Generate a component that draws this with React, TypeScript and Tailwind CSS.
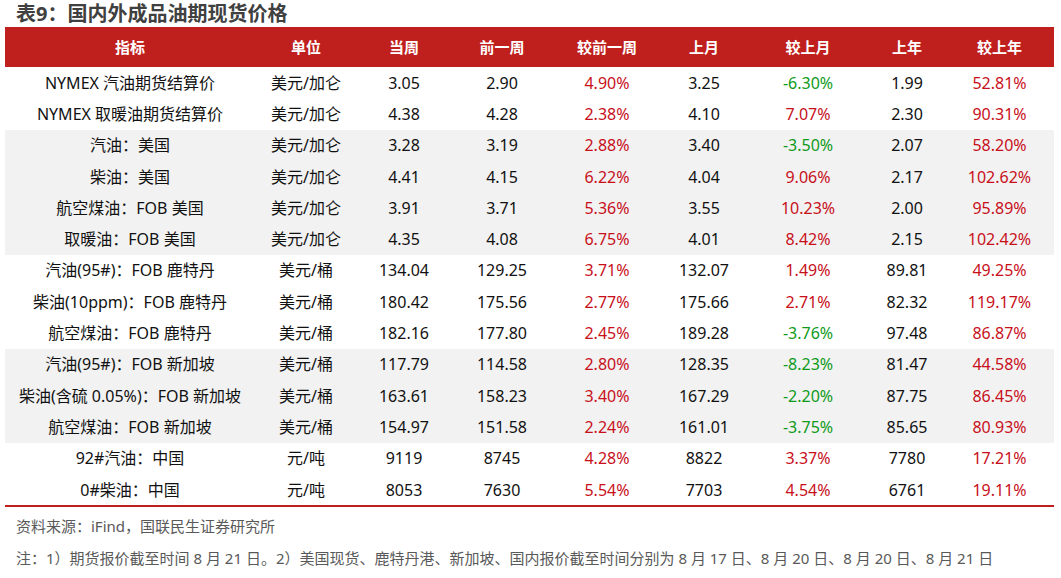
const cols = "grid grid-cols-[250px_102px_94px_102px_108px_86px_122px_76px_109px]";

type Row = {
  name: string;
  unit: string;
  cur: string;
  prev: string;
  wow: string;
  lastM: string;
  mom: string;
  lastY: string;
  yoy: string;
  shade: boolean;
};

const rows: Row[] = [
  { name: "NYMEX 汽油期货结算价", unit: "美元/加仑", cur: "3.05", prev: "2.90", wow: "4.90%", lastM: "3.25", mom: "-6.30%", lastY: "1.99", yoy: "52.81%", shade: false },
  { name: "NYMEX 取暖油期货结算价", unit: "美元/加仑", cur: "4.38", prev: "4.28", wow: "2.38%", lastM: "4.10", mom: "7.07%", lastY: "2.30", yoy: "90.31%", shade: false },
  { name: "汽油：美国", unit: "美元/加仑", cur: "3.28", prev: "3.19", wow: "2.88%", lastM: "3.40", mom: "-3.50%", lastY: "2.07", yoy: "58.20%", shade: true },
  { name: "柴油：美国", unit: "美元/加仑", cur: "4.41", prev: "4.15", wow: "6.22%", lastM: "4.04", mom: "9.06%", lastY: "2.17", yoy: "102.62%", shade: true },
  { name: "航空煤油：FOB 美国", unit: "美元/加仑", cur: "3.91", prev: "3.71", wow: "5.36%", lastM: "3.55", mom: "10.23%", lastY: "2.00", yoy: "95.89%", shade: true },
  { name: "取暖油：FOB 美国", unit: "美元/加仑", cur: "4.35", prev: "4.08", wow: "6.75%", lastM: "4.01", mom: "8.42%", lastY: "2.15", yoy: "102.42%", shade: true },
  { name: "汽油(95#)：FOB 鹿特丹", unit: "美元/桶", cur: "134.04", prev: "129.25", wow: "3.71%", lastM: "132.07", mom: "1.49%", lastY: "89.81", yoy: "49.25%", shade: false },
  { name: "柴油(10ppm)：FOB 鹿特丹", unit: "美元/桶", cur: "180.42", prev: "175.56", wow: "2.77%", lastM: "175.66", mom: "2.71%", lastY: "82.32", yoy: "119.17%", shade: false },
  { name: "航空煤油：FOB 鹿特丹", unit: "美元/桶", cur: "182.16", prev: "177.80", wow: "2.45%", lastM: "189.28", mom: "-3.76%", lastY: "97.48", yoy: "86.87%", shade: false },
  { name: "汽油(95#)：FOB 新加坡", unit: "美元/桶", cur: "117.79", prev: "114.58", wow: "2.80%", lastM: "128.35", mom: "-8.23%", lastY: "81.47", yoy: "44.58%", shade: true },
  { name: "柴油(含硫 0.05%)：FOB 新加坡", unit: "美元/桶", cur: "163.61", prev: "158.23", wow: "3.40%", lastM: "167.29", mom: "-2.20%", lastY: "87.75", yoy: "86.45%", shade: true },
  { name: "航空煤油：FOB 新加坡", unit: "美元/桶", cur: "154.97", prev: "151.58", wow: "2.24%", lastM: "161.01", mom: "-3.75%", lastY: "85.65", yoy: "80.93%", shade: true },
  { name: "92#汽油：中国", unit: "元/吨", cur: "9119", prev: "8745", wow: "4.28%", lastM: "8822", mom: "3.37%", lastY: "7780", yoy: "17.21%", shade: false },
  { name: "0#柴油：中国", unit: "元/吨", cur: "8053", prev: "7630", wow: "5.54%", lastM: "7703", mom: "4.54%", lastY: "6761", yoy: "19.11%", shade: false },
];

function pct(v: string) {
  return v.startsWith("-") ? "text-[#0f9a1a]" : "text-[#c8101a]";
}

export default function App() {
  return (
    <div className="w-[1061px] h-[578px] bg-white overflow-hidden font-['Noto_Sans','Noto_Sans_CJK_SC',sans-serif] text-[#111]">
      {/* Title */}
      <div className="h-[27px] pl-[16px] pt-[1px] text-[20px] leading-[26px] font-bold text-[#404040]">
        表9：国内外成品油期现货价格
      </div>

      <div className="ml-[5px] w-[1049px]">
        {/* Header */}
        <div className={`${cols} h-[40px] bg-[#bf201d] text-white font-bold text-[15px]`}>
          {["指标", "单位", "当周", "前一周", "较前一周", "上月", "较上月", "上年", "较上年"].map((h) => (
            <div key={h} className="flex items-center justify-center">
              {h}
            </div>
          ))}
        </div>

        {/* Body */}
        <div className="border-b-2 border-[#bf201d]">
          {rows.map((r) => (
            <div
              key={r.name}
              className={`${cols} h-[31.3px] text-[16px] ${r.shade ? "bg-[#f2f2f2]" : "bg-white"}`}
            >
              <div className="flex items-center justify-center whitespace-nowrap">{r.name}</div>
              <div className="flex items-center justify-center">{r.unit}</div>
              <div className="flex items-center justify-center">{r.cur}</div>
              <div className="flex items-center justify-center">{r.prev}</div>
              <div className={`flex items-center justify-center ${pct(r.wow)}`}>{r.wow}</div>
              <div className="flex items-center justify-center">{r.lastM}</div>
              <div className={`flex items-center justify-center ${pct(r.mom)}`}>{r.mom}</div>
              <div className="flex items-center justify-center">{r.lastY}</div>
              <div className={`flex items-center justify-center ${pct(r.yoy)}`}>{r.yoy}</div>
            </div>
          ))}
        </div>
      </div>

      {/* Footnotes */}
      <div className="pl-[16px] pt-[9px] text-[15px] leading-[20px] text-[#595959]">
        <div>资料来源：iFind，国联民生证券研究所</div>
        <div className="mt-[12px] whitespace-nowrap">
          注：1）期货报价截至时间 8 月 21 日。2）美国现货、鹿特丹港、新加坡、国内报价截至时间分别为 8 月 17 日、8 月 20 日、8 月 20 日、8 月 21 日
        </div>
      </div>
    </div>
  );
}
